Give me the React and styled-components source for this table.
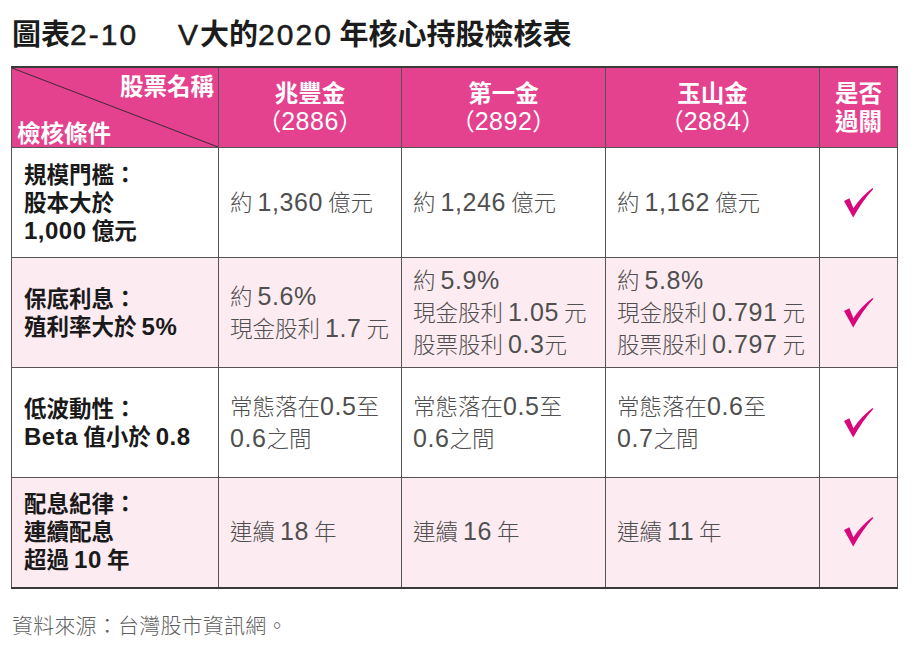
import React from 'react';
import styled, { createGlobalStyle } from 'styled-components';

const GlobalStyle = createGlobalStyle`
  html, body {
    margin: 0;
    padding: 0;
    background: #ffffff;
  }
  body {
    font-family: "Noto Sans CJK TC", "Noto Sans CJK SC", sans-serif;
  }
`;

// latin runs (digits, Beta, %) are set a bit larger than the CJK text, like the print layout
const Latin = styled.span`
  font-family: "Liberation Sans", "Noto Sans CJK TC", sans-serif;
  line-height: 1;
`;

const Mixed = ({ text }) =>
  text.split(/([A-Za-z0-9.,%\-]+)/g).map((part, i) =>
    i % 2 === 1 ? <Latin key={i}>{part}</Latin> : part
  );

const Page = styled.div`
  width: 913px;
  height: 651px;
  padding: 13px 0 0 11px;
  box-sizing: border-box;
  background: #fff;
`;

const Title = styled.h1`
  height: 38px;
  margin: 0 0 15px 1px;
  font-size: 29px;
  line-height: 38px;
  font-weight: 700;
  color: #1c1c1c;
  white-space: nowrap;

  ${Latin} {
    font-size: 30px;
    font-weight: 400;
    letter-spacing: 2px;
    -webkit-text-stroke: 0.5px #1c1c1c;
  }
`;

const Gap = styled.span`
  display: inline-block;
  width: ${(p) => p.$w}px;
`;

const Table = styled.table`
  width: 886px;
  border-collapse: collapse;
  table-layout: fixed;
  border-top: 2px solid #3a3a3a;
  border-bottom: 2px solid #3a3a3a;
`;

const Col = styled.col`
  width: ${(p) => p.$w}px;
`;

const Row = styled.tr`
  height: ${(p) => p.$h}px;
  background: ${(p) => (p.$tint ? '#fdebf2' : '#ffffff')};
`;

const HeadRow = styled.tr`
  height: 80px;
  background: #e4428e;
`;

const HeadCell = styled.th`
  border: 1px solid #555;
  padding: 0 0 4px;
  color: #fff;
  font-size: 23.5px;
  line-height: 28px;
  text-align: center;
  vertical-align: middle;
  font-weight: 700;

  ${Latin} {
    font-size: 25px;
    letter-spacing: 0.5px;
  }
`;

const HeadName = styled.div`
  height: 28px;
  font-weight: 700;
`;

const HeadCode = styled.div`
  height: 28px;
  font-weight: 400;
`;

const CornerCell = styled.th`
  border: 1px solid #555;
  padding: 0;
  color: #fff;
  font-size: 23.5px;
  line-height: 28px;
  font-weight: 700;
`;

const CornerInner = styled.div`
  position: relative;
  height: 79px;
  display: flex;
  flex-direction: column;
  justify-content: space-between;
  padding: 3px 4px 1px 5px;
  box-sizing: border-box;
`;

const CornerTop = styled.span`
  align-self: flex-end;
`;

const CornerBottom = styled.span`
  align-self: flex-start;
`;

const Diagonal = styled.svg`
  position: absolute;
  left: 0;
  top: 0;
  width: 100%;
  height: 100%;
  pointer-events: none;
`;

const LabelCell = styled.td`
  border: 1px solid #555;
  padding: 0 6px 4px 12px;
  font-size: 22.5px;
  line-height: 28px;
  font-weight: 700;
  color: #1a1a1a;
  vertical-align: middle;
  white-space: nowrap;

  ${Latin} {
    font-size: 24px;
    letter-spacing: 0.5px;
  }
`;

const DataCell = styled.td`
  border: 1px solid #555;
  padding: 0 2px 4px 11px;
  font-size: 22.5px;
  line-height: 32px;
  font-weight: 300;
  color: #4f4f4f;
  vertical-align: middle;
  white-space: nowrap;

  ${Latin} {
    font-size: 25px;
    letter-spacing: 0.6px;
  }
`;

const CheckCell = styled.td`
  border: 1px solid #555;
  padding: 0;
  text-align: center;
  vertical-align: middle;
`;

const Line = styled.div`
  height: ${(p) => p.$h}px;
`;

const Source = styled.p`
  margin: 21px 0 0 1px;
  font-size: 21px;
  line-height: 28px;
  font-weight: 300;
  color: #5f5f5f;
  letter-spacing: 0.2px;
`;

const Check = () => (
  <svg width="30" height="30" viewBox="0 0 30 30" style={{ display: 'inline-block', verticalAlign: 'middle' }}>
    <path d="M0 13 L5.4 10.2 L9.4 20.3 Q17 8.5 28.5 0 L29.3 1 Q19 12 9.2 29.5 Z" fill="#d8087c" />
  </svg>
);

const rows = [
  {
    label: ['規模門檻：', '股本大於', '1,000 億元'],
    cells: [['約 1,360 億元'], ['約 1,246 億元'], ['約 1,162 億元']],
    h: 110,
  },
  {
    label: ['保底利息：', '殖利率大於 5%'],
    cells: [
      ['約 5.6%', '現金股利 1.7 元'],
      ['約 5.9%', '現金股利 1.05 元', '股票股利 0.3元'],
      ['約 5.8%', '現金股利 0.791 元', '股票股利 0.797 元'],
    ],
    h: 110,
    tint: true,
  },
  {
    label: ['低波動性：', 'Beta 值小於 0.8'],
    cells: [
      ['常態落在0.5至', '0.6之間'],
      ['常態落在0.5至', '0.6之間'],
      ['常態落在0.6至', '0.7之間'],
    ],
    h: 110,
  },
  {
    label: ['配息紀律：', '連續配息', '超過 10 年'],
    cells: [['連續 18 年'], ['連續 16 年'], ['連續 11 年']],
    h: 110,
    tint: true,
  },
];

const stocks = [
  { name: '兆豐金', code: '（2886）' },
  { name: '第一金', code: '（2892）' },
  { name: '玉山金', code: '（2884）' },
];

export default function App() {
  return (
    <>
      <GlobalStyle />
      <Page>
        <Title>
          <Mixed text="圖表2-10" />
          <Gap $w={40} />
          <Mixed text="V大的2020 年核心持股檢核表" />
        </Title>
        <Table>
          <colgroup>
            <Col $w={207} />
            <Col $w={183} />
            <Col $w={204} />
            <Col $w={214} />
            <Col $w={78} />
          </colgroup>
          <thead>
            <HeadRow>
              <CornerCell>
                <CornerInner>
                  <Diagonal viewBox="0 0 100 100" preserveAspectRatio="none">
                    <line x1="0" y1="0" x2="100" y2="100" stroke="#3a2a33" strokeWidth="1" vectorEffect="non-scaling-stroke" />
                  </Diagonal>
                  <CornerTop>股票名稱</CornerTop>
                  <CornerBottom>檢核條件</CornerBottom>
                </CornerInner>
              </CornerCell>
              {stocks.map((s) => (
                <HeadCell key={s.code}>
                  <HeadName>{s.name}</HeadName>
                  <HeadCode>
                    <Mixed text={s.code} />
                  </HeadCode>
                </HeadCell>
              ))}
              <HeadCell>
                <HeadName>是否</HeadName>
                <HeadName>過關</HeadName>
              </HeadCell>
            </HeadRow>
          </thead>
          <tbody>
            {rows.map((r, i) => (
              <Row key={i} $h={r.h} $tint={r.tint}>
                <LabelCell>
                  {r.label.map((t) => (
                    <Line key={t} $h={28}>
                      <Mixed text={t} />
                    </Line>
                  ))}
                </LabelCell>
                {r.cells.map((c, j) => (
                  <DataCell key={j}>
                    {c.map((t) => (
                      <Line key={t} $h={32}>
                        <Mixed text={t} />
                      </Line>
                    ))}
                  </DataCell>
                ))}
                <CheckCell>
                  <Check />
                </CheckCell>
              </Row>
            ))}
          </tbody>
        </Table>
        <Source>資料來源：台灣股市資訊網。</Source>
      </Page>
    </>
  );
}
